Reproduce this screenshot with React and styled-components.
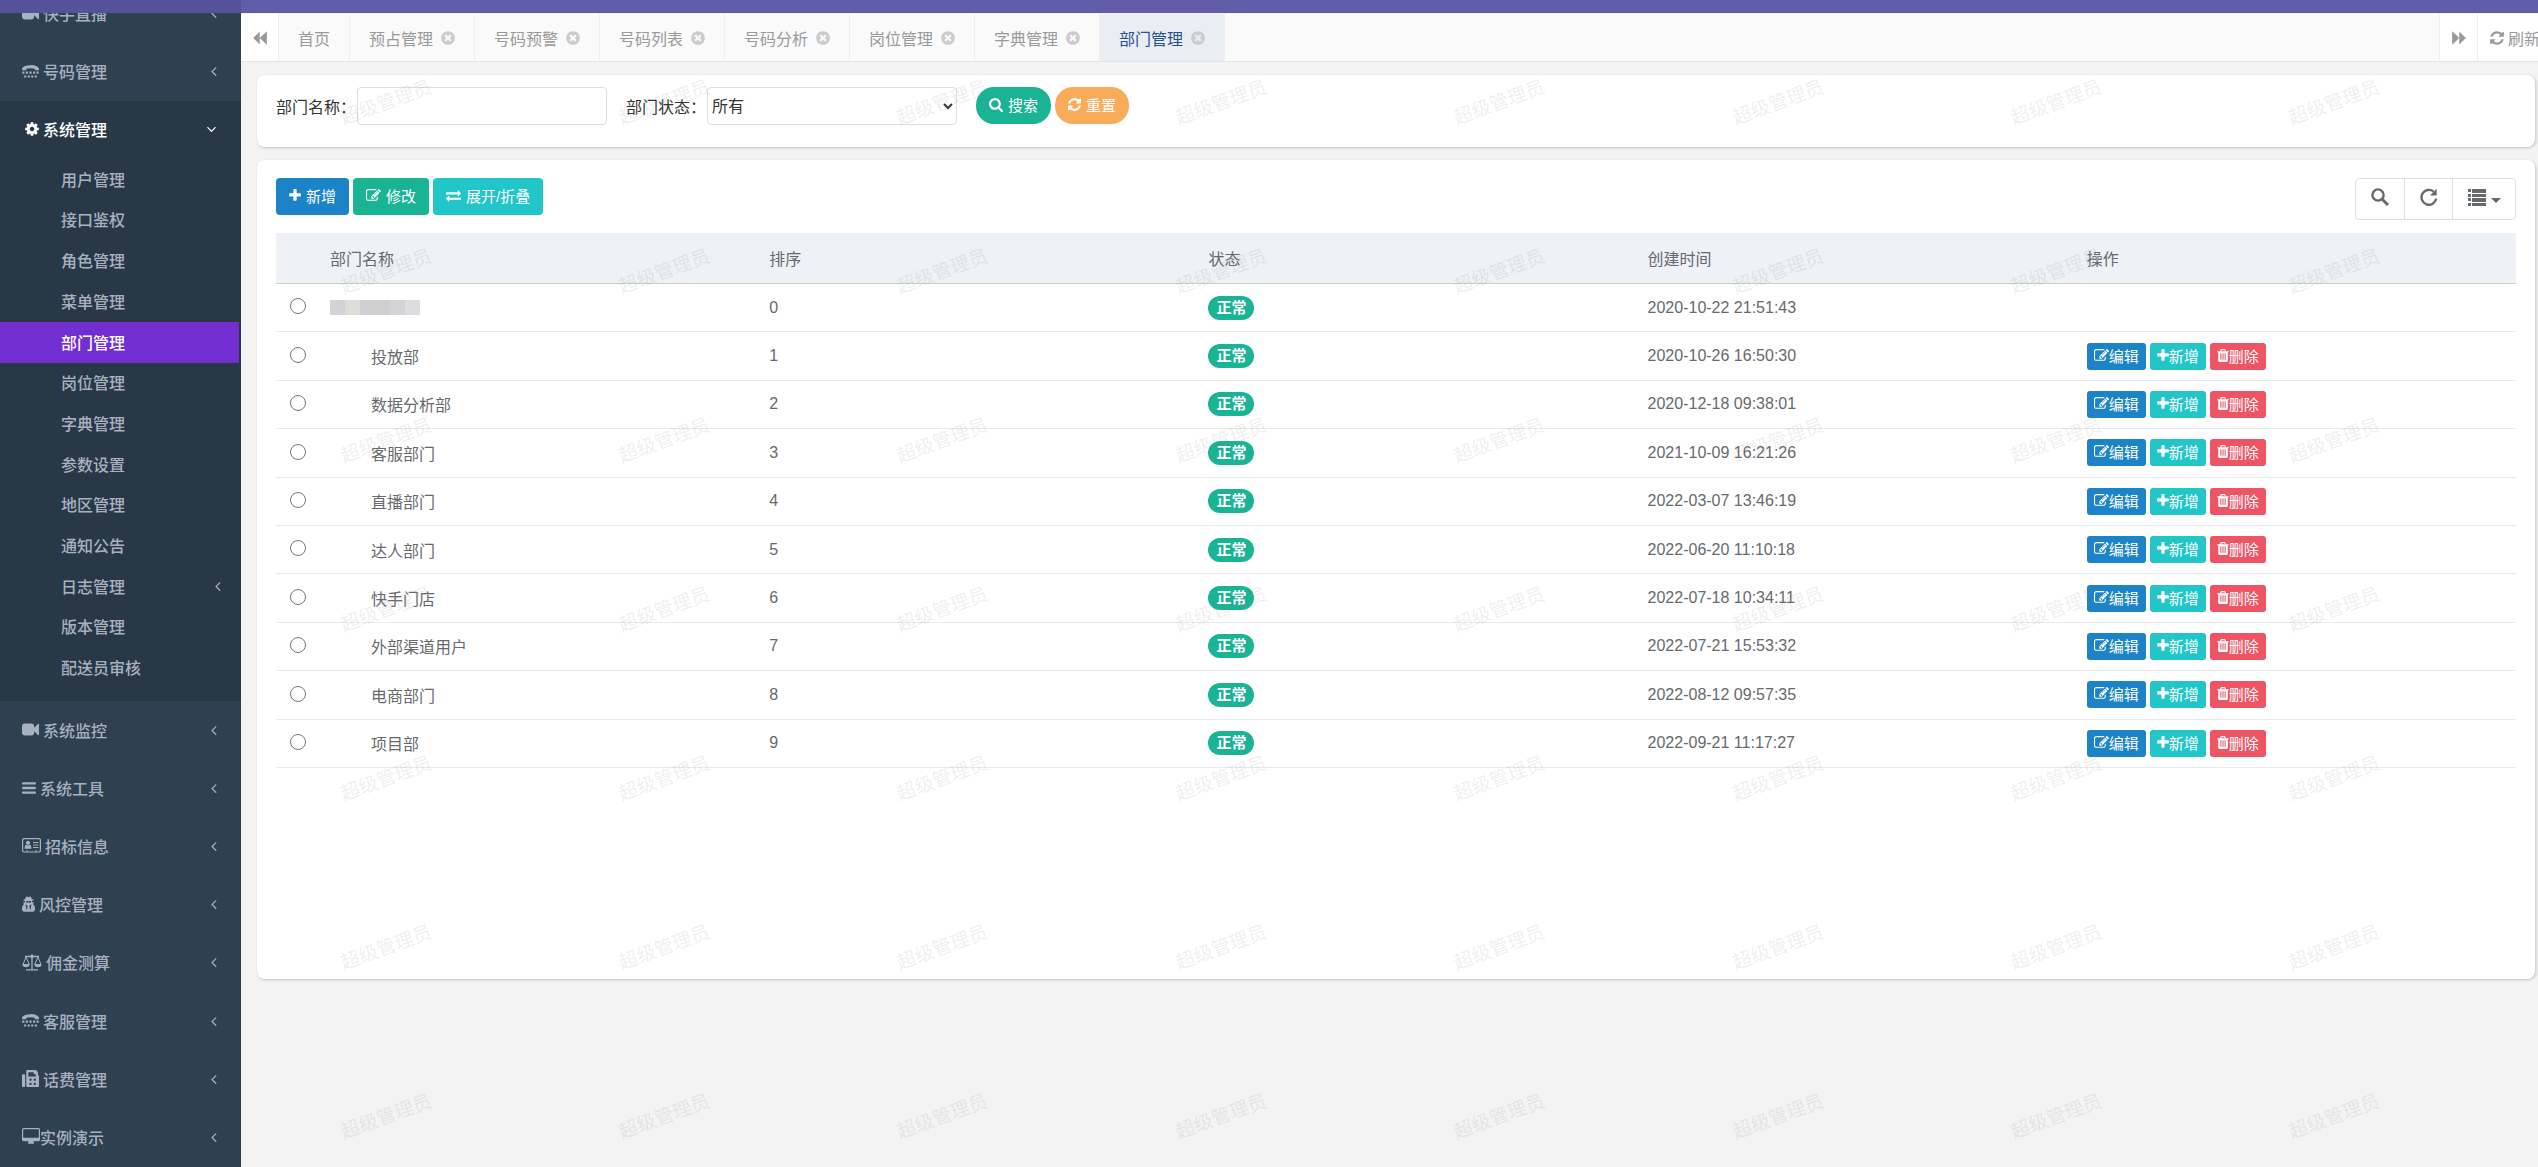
import { useState } from "react";
import styled, { createGlobalStyle, css } from "styled-components";
import { FaFax } from "react-icons/fa";

const GlobalStyle = createGlobalStyle`
  * {
    box-sizing: border-box;
  }
  body {
    margin: 0;
    overflow: hidden;
    font-family: "Liberation Sans", "Noto Sans CJK SC", sans-serif;
    font-size: 16px;
    color: #676a6c;
    background-color: #f3f3f3;
  }
  button, input, select {
    font-family: inherit;
  }
`

//icon outlines, drawn on a 1792 grid: [left edge, width, path]
const glyphs = {
  plus: [192, 1408, "M1600 736v192q0 40-28 68t-68 28h-416v416q0 40-28 68t-68 28h-192q-40 0-68-28t-28-68v-416h-416q-40 0-68-28t-28-68v-192q0-40 28-68t68-28h416v-416q0-40 28-68t68-28h192q40 0 68 28t28 68v416h416q40 0 68 28t28 68z"],
  edit: [0, 1792, "M888 1184l116-116-152-152-116 116v56h96v96h56zm440-720q-16-16-33 1l-350 350q-17 17-1 33t33-1l350-350q17-17 1-33zm80 594v190q0 119-84.5 203.5t-203.5 84.5h-832q-119 0-203.5-84.5t-84.5-203.5v-832q0-119 84.5-203.5t203.5-84.5h832q63 0 117 25 15 7 18 23 3 17-9 29l-49 49q-14 14-32 8-23-6-45-6h-832q-66 0-113 47t-47 113v832q0 66 47 113t113 47h832q66 0 113-47t47-113v-126q0-13 9-22l64-64q15-15 35-7t20 29zm-96-738l288 288-672 672h-288v-288zm444 132l-92 92-288-288 92-92q28-28 68-28t68 28l152 152q28 28 28 68t-28 68z"],
  exchange: [0, 1792, "M1792 1184v192q0 13-9.5 22.5t-22.5 9.5h-1376v192q0 13-9.5 22.5t-22.5 9.5q-12 0-24-10l-319-320q-9-9-9-22 0-14 9-23l320-320q9-9 23-9 13 0 22.5 9.5t9.5 22.5v192h1376q13 0 22.5 9.5t9.5 22.5zm0-544q0 14-9 23l-320 320q-9 9-23 9-13 0-22.5-9.5t-9.5-22.5v-192h-1376q-13 0-22.5-9.5t-9.5-22.5v-192q0-13 9.5-22.5t22.5-9.5h1376v-192q0-14 9-23t23-9q12 0 24 10l319 319q9 9 9 23z"],
  search: [64, 1664, "M1216 832q0-185-131.5-316.5t-316.5-131.5-316.5 131.5-131.5 316.5 131.5 316.5 316.5 131.5 316.5-131.5 131.5-316.5zm512 832q0 52-38 90t-90 38q-54 0-90-38l-343-342q-179 124-399 124-143 0-273.5-55.5t-225-150-150-225-55.5-273.5 55.5-273.5 150-225 225-150 273.5-55.5 273.5 55.5 225 150 150 225 55.5 273.5q0 220-124 399l343 343q37 37 37 90z"],
  refresh: [128, 1536, "M1639 1056q0 5-1 7-64 268-268 434.5t-478 166.5q-146 0-282.5-55t-243.5-157l-129 129q-19 19-45 19t-45-19-19-45v-448q0-26 19-45t45-19h448q26 0 45 19t19 45-19 45l-137 137q71 66 161 102t187 36q134 0 250-65t186-179q11-17 53-117 8-23 30-23h192q13 0 22.5 9.5t9.5 22.5zm25-800v448q0 26-19 45t-45 19h-448q-26 0-45-19t-19-45 19-45l138-138q-148-137-349-137-134 0-250 65t-186 179q-11 17-53 117-8 23-30 23h-199q-13 0-22.5-9.5t-9.5-22.5v-7q65-268 270-434.5t480-166.5q146 0 284 55.5t245 156.5l130-129q19-19 45-19t45 19 19 45z"],
  trash: [192, 1408, "M704 1376v-704q0-14-9-23t-23-9h-64q-14 0-23 9t-9 23v704q0 14 9 23t23 9h64q14 0 23-9t9-23zm256 0v-704q0-14-9-23t-23-9h-64q-14 0-23 9t-9 23v704q0 14 9 23t23 9h64q14 0 23-9t9-23zm256 0v-704q0-14-9-23t-23-9h-64q-14 0-23 9t-9 23v704q0 14 9 23t23 9h64q14 0 23-9t9-23zm-544-992h448l-48-117q-7-9-17-11h-317q-10 2-17 11zm928 32v64q0 14-9 23t-23 9h-96v948q0 83-47 143.5t-113 60.5h-832q-66 0-113-58.5t-47-141.5v-952h-96q-14 0-23-9t-9-23v-64q0-14 9-23t23-9h309l70-167q15-37 54-63t79-26h320q40 0 79 26t54 63l70 167h309q14 0 23 9t9 23z"],
  close: [128, 1536, "M1277 1122q0-26-19-45l-181-181 181-181q19-19 19-45 0-27-19-46l-90-90q-19-19-46-19-26 0-45 19l-181 181-181-181q-19-19-45-19-27 0-46 19l-90 90q-19 19-19 46 0 26 19 45l181 181-181 181q-19 19-19 45 0 27 19 46l90 90q19 19 46 19 26 0 45-19l181-181 181 181q19 19 45 19 27 0 46-19l90-90q19-19 19-46zm387-226q0 209-103 385.5t-279.5 279.5-385.5 103-385.5-103-279.5-279.5-103-385.5 103-385.5 279.5-279.5 385.5-103 385.5 103 279.5 279.5 103 385.5z"],
  video: [0, 1792, "M1792 352v1088q0 42-39 59-13 5-25 5-27 0-45-19l-403-403v166q0 119-84.5 203.5t-203.5 84.5h-704q-119 0-203.5-84.5t-84.5-203.5v-704q0-119 84.5-203.5t203.5-84.5h704q119 0 203.5 84.5t84.5 203.5v165l403-402q18-19 45-19 12 0 25 5 39 17 39 59z"],
  cog: [128, 1536, "M1152 896q0-106-75-181t-181-75-181 75-75 181 75 181 181 75 181-75 75-181zm512-109v222q0 12-8 23t-20 13l-185 28q-19 54-39 91 35 50 107 138 10 12 10 25t-9 23q-27 37-99 108t-94 71q-12 0-26-9l-138-108q-44 23-91 38-16 136-29 186-7 28-36 28h-222q-14 0-24.5-8.5t-11.5-21.5l-28-184q-49-16-90-37l-141 107q-10 9-25 9-14 0-25-11-126-114-165-168-7-10-7-23 0-12 8-23 15-21 51-66.5t54-70.5q-27-50-41-99l-183-27q-13-2-21-12.5t-8-23.5v-222q0-12 8-23t19-13l186-28q14-46 39-92-40-57-107-138-10-12-10-24 0-10 9-23 26-36 98.5-107.5t94.5-71.5q13 0 26 10l138 107q44-23 91-38 16-136 29-186 7-28 36-28h222q14 0 24.5 8.5t11.5 21.5l28 184q49 16 90 37l142-107q9-9 24-9 13 0 25 10 129 119 165 170 7 8 7 22 0 12-8 23-15 21-51 66.5t-54 70.5q26 50 41 98l183 28q13 2 21 12.5t8 23.5z"],
  bars: [128, 1536, "M192 256h1408q64 0 64 64v128q0 64-64 64h-1408q-64 0-64-64v-128q0-64 64-64zM192 768h1408q64 0 64 64v128q0 64-64 64h-1408q-64 0-64-64v-128q0-64 64-64zM192 1280h1408q64 0 64 64v128q0 64-64 64h-1408q-64 0-64-64v-128q0-64 64-64z"],
  tty: [0, 1792, "M0 736V640Q0 448 260 340T896 224T1532 340T1792 640V736Q1792 768 1760 768H1376Q1344 768 1344 736V608Q1130 544 896 544T448 608V736Q448 768 416 768H32Q0 768 0 736ZM32 896h224v224H32zM400 896h224v224H400zM784 896h224v224H784zM1168 896h224v224H1168zM1536 896h224v224H1536zM224 1312h224v224H224zM600 1312h224v224H600zM968 1312h224v224H968zM1344 1312h224v224H1344z"],
  secret: [192, 1408, "M704 1536l96-448-96-128-128-64zm384 0l128-640-128 64-96 128zm104-993q-2-4-4-6-10-8-96-8-70 0-167 19-7 2-21 2t-21-2q-97-19-167-19-86 0-96 8-2 2-4 6 2 18 4 27 2 3 7.5 6.5t7.5 10.5q2 4 7.5 20.5t7 20.5 7.5 17 8.5 17 9 14 12 13.5 14 9.5 17.5 8 20.5 4 24.5 2q36 0 59-12.5t32.5-30 14.5-34.5 11.5-29.5 17.5-12.5h12q11 0 17.5 12.5t11.5 29.5 14.5 34.5 32.5 30 59 12.5q13 0 24.5-2t20.5-4 17.5-8 14-9.5 12-13.5 9-14 8.5-17 7.5-17 7-20.5 7.5-20.5q2-7 7.5-10.5t7.5-6.5q2-9 4-27zm408 879q0 121-73 190t-194 69h-874q-121 0-194-69t-73-190q0-61 4.5-118t19-125.5 37.5-123.5 63.5-103.5 93.5-74.5l-90-220h214q-22-64-22-128 0-12 2-32-194-40-194-96 0-57 210-99 17-62 51.5-134t70.5-114q32-37 76-37 30 0 84 31t84 31 84-31 84-31q44 0 76 37 36 42 70.5 114t51.5 134q210 42 210 99 0 56-194 96 7 81-20 160h214l-82 225q63 33 107.5 96.5t65.5 143.5 29 151.5 8 148.5z"],
  desktop: [0, 1920, "M1792 992V160q0-13-9.5-22.5t-22.5-9.5h-1600q-13 0-22.5 9.5t-9.5 22.5v832q0 13 9.5 22.5t22.5 9.5h1600q13 0 22.5-9.5t9.5-22.5zm128-832v1088q0 66-47 113t-113 47h-544q0 37 16 77.5t32 71 16 43.5q0 26-19 45t-45 19h-512q-26 0-45-19t-19-45q0-14 16-44t32-70 16-78h-544q-66 0-113-47t-47-113v-1088q0-66 47-113t113-47h1600q66 0 113 47t47 113z"],
  left: [600, 640, "M1203 544q0 13-10 23l-393 393 393 393q10 10 10 23t-10 23l-50 50q-10 10-23 10t-23-10l-466-466q-10-10-10-23t10-23l466-466q10-10 23-10t23 10l50 50q10 10 10 23z"],
  down: [384, 1024, "M1395 736q0 13-10 23l-466 466q-10 10-23 10t-23-10l-466-466q-10-10-10-23t10-23l50-50q10-10 23-10t23 10l393 393 393-393q10-10 23-10t23 10l50 50q10 10 10 23z"],
  backward: [128, 1536, "M864 896L1664 128V1664ZM128 896L864 160V1632Z"],
  forward: [128, 1536, "M928 896L128 128V1664ZM1664 896L928 160V1632Z"],
}

const Glyph = ({ name, size = 16 }) => {
  const [x, width, d] = glyphs[name];

  return (
    <svg height={size} width={Math.round(size * width / 1792)} viewBox={`${x} 0 ${width} 1792`} fill="currentColor" aria-hidden="true">
      <path d={d} />
    </svg>
  )
}

const Scales = () => (
  <svg width="20" height="17" viewBox="0 0 20 17" fill="none" stroke="currentColor" aria-hidden="true">
    <path d="M3 2.5h14M10 0.5v15M4 15.8h12" strokeWidth="1.3" />
    <path d="M4 3L1 10.5h6.4L4 3zM16 3l-3.4 7.5H19L16 3z" />
    <path d="M0.3 10.5h7.4q-.6 2.8-3.7 2.8t-3.7-2.8zM12.3 10.5h7.4q-.6 2.8-3.7 2.8t-3.7-2.8z" fill="currentColor" stroke="none" />
    <circle cx="10" cy="2.2" r="1.6" fill="currentColor" stroke="none" />
  </svg>
)

const AddressCard = () => (
  <svg width="19" height="15" viewBox="0 0 19 15" fill="none" stroke="currentColor" aria-hidden="true">
    <rect x="0.6" y="0.6" width="17.8" height="13.4" rx="1.4" strokeWidth="1.2" />
    <path d="M11 4.5h5.5M11 7h5.5M11 9.5h5.5M4 13h2M13 13h2" strokeWidth="1.1" />
    <circle cx="6" cy="4.8" r="2.1" fill="currentColor" stroke="none" />
    <path d="M2.6 10.8q0-4 1.8-4 1.6 1.2 3.2 0 1.8 0 1.8 4z" fill="currentColor" stroke="none" />
  </svg>
)

const topMenu = [
  { name: "快手直播", icon: <Glyph name="video" size={17} /> },
  { name: "号码管理", icon: <Glyph name="tty" size={17} /> },
]

const systemMenu = [
  "用户管理", "接口鉴权", "角色管理", "菜单管理", "部门管理", "岗位管理", "字典管理",
  "参数设置", "地区管理", "通知公告", "日志管理", "版本管理", "配送员审核",
]

const bottomMenu = [
  { name: "系统监控", icon: <Glyph name="video" size={17} /> },
  { name: "系统工具", icon: <Glyph name="bars" /> },
  { name: "招标信息", icon: <AddressCard /> },
  { name: "风控管理", icon: <Glyph name="secret" size={17} /> },
  { name: "佣金测算", icon: <Scales /> },
  { name: "客服管理", icon: <Glyph name="tty" size={17} /> },
  { name: "话费管理", icon: <FaFax size={17} /> },
  { name: "实例演示", icon: <Glyph name="desktop" size={17} />, tight: true },
]

const tabs = ["预占管理", "号码预警", "号码列表", "号码分析", "岗位管理", "字典管理", "部门管理"];

const departments = [
  { name: "", order: 0, time: "2020-10-22 21:51:43" },
  { name: "投放部", order: 1, time: "2020-10-26 16:50:30" },
  { name: "数据分析部", order: 2, time: "2020-12-18 09:38:01" },
  { name: "客服部门", order: 3, time: "2021-10-09 16:21:26" },
  { name: "直播部门", order: 4, time: "2022-03-07 13:46:19" },
  { name: "达人部门", order: 5, time: "2022-06-20 11:10:18" },
  { name: "快手门店", order: 6, time: "2022-07-18 10:34:11" },
  { name: "外部渠道用户", order: 7, time: "2022-07-21 15:53:32" },
  { name: "电商部门", order: 8, time: "2022-08-12 09:57:35" },
  { name: "项目部", order: 9, time: "2022-09-21 11:17:27" },
]

const maskColors = ["#d2d3d6", "#dcddda", "#cfd0d3", "#cfcfd0", "#d3d4d7", "#dcdde0"];

//side menu
const MenuLink = ({ item }) => (
  <MenuItem href="#">
    <MenuLabel $tight={item.tight}>
      {item.icon}
      {item.name}
    </MenuLabel>
    <Glyph name="left" />
  </MenuItem>
)

const SideMenu = () => (
  <Sidebar>
    <Menu>
      {topMenu.map(item => <MenuLink key={item.name} item={item} />)}
      <OpenSection>
        <OpenItem href="#">
          <MenuLabel>
            <Glyph name="cog" />
            系统管理
          </MenuLabel>
          <Glyph name="down" />
        </OpenItem>
        <SubMenu>
          {systemMenu.map(name => (
            <SubItem key={name} href="#" $active={name === "部门管理"}>
              {name}
              {name === "日志管理" && <Glyph name="left" />}
            </SubItem>
          ))}
        </SubMenu>
      </OpenSection>
      {bottomMenu.map(item => <MenuLink key={item.name} item={item} />)}
    </Menu>
  </Sidebar>
)

//opened pages
const TabBar = () => (
  <Tabs>
    <TabButton aria-label="向左">
      <Glyph name="backward" />
    </TabButton>
    <TabList>
      <Tab href="#">首页</Tab>
      {tabs.map(name => (
        <Tab key={name} href="#" $active={name === "部门管理"}>
          {name}
          <Glyph name="close" />
        </Tab>
      ))}
    </TabList>
    <TabTools>
      <TabButton aria-label="向右">
        <Glyph name="forward" />
      </TabButton>
      <RefreshButton>
        <Glyph name="refresh" />
        刷新
      </RefreshButton>
    </TabTools>
  </Tabs>
)

const SearchForm = () => (
  <SearchPanel onSubmit={e => e.preventDefault()}>
    <Field>
      <label htmlFor="deptName">部门名称：</label>
      <TextInput id="deptName" type="text" />
    </Field>
    <Field>
      <label htmlFor="status">部门状态：</label>
      <Select id="status">
        <option>所有</option>
        <option>正常</option>
        <option>停用</option>
      </Select>
    </Field>
    <Buttons>
      <RoundButton type="submit" $color="#1ab394">
        <Glyph name="search" size={15} />
        搜索
      </RoundButton>
      <RoundButton type="reset" $color="#f8ac59">
        <Glyph name="refresh" size={15} />
        重置
      </RoundButton>
    </Buttons>
  </SearchPanel>
)

const Toolbar = () => (
  <ToolbarRow>
    <Buttons>
      <Button $color="#1c84c6"><Glyph name="plus" size={15} />新增</Button>
      <Button $color="#1ab394"><Glyph name="edit" size={15} />修改</Button>
      <Button $color="#23c6c8"><Glyph name="exchange" size={15} />展开/折叠</Button>
    </Buttons>
    <ToolGroup>
      <Tool aria-label="搜索">
        <svg width="18" height="18" viewBox="0 0 18 18" fill="none" stroke="currentColor" strokeWidth="3">
          <circle cx="7" cy="7" r="5.6" strokeWidth="2.4" />
          <path d="M11 11l6 6" />
        </svg>
      </Tool>
      <Tool aria-label="刷新">
        <svg width="18" height="18" viewBox="0 0 18 18">
          <path d="M13.6 3.6A7.4 7.4 0 1 0 16.2 10.6" fill="none" stroke="currentColor" strokeWidth="2.4" />
          <path d="M16.6 0.8V7.4H10Z" fill="currentColor" />
        </svg>
      </Tool>
      <Tool $wide aria-label="列">
        <svg width="18" height="18" viewBox="0 0 18 18" fill="currentColor">
          <path d="M0 1h3v3H0zM4 1h14v4H4zM0 6h3v3H0zM4 6h14v3H4zM0 10h3v3H0zM4 10h14v4H4zM0 15h3v3H0zM4 15h14v3H4z" />
        </svg>
        <Caret />
      </Tool>
    </ToolGroup>
  </ToolbarRow>
)

const DeptTable = () => {
  const [selected, setSelected] = useState(null);

  return (
    <Table>
      <thead>
        <tr>
          <HeadCell $radio aria-label="选择" />
          <HeadCell>部门名称</HeadCell>
          <HeadCell>排序</HeadCell>
          <HeadCell>状态</HeadCell>
          <HeadCell>创建时间</HeadCell>
          <HeadCell>操作</HeadCell>
        </tr>
      </thead>
      <tbody>
        {departments.map(dept => (
          <tr key={dept.order}>
            <Cell $radio>
              <Radio
                type="radio"
                name="dept"
                aria-label={`选择 ${dept.name}`}
                checked={selected === dept.order}
                onChange={() => setSelected(dept.order)}
              />
            </Cell>
            <Cell>
              {dept.name
                ? <ChildName>{dept.name}</ChildName>
                : <Mask>{maskColors.map(color => <MaskBlock key={color} $color={color} />)}</Mask>
              }
            </Cell>
            <Cell>{dept.order}</Cell>
            <Cell><Badge>正常</Badge></Cell>
            <Cell>{dept.time}</Cell>
            <Cell>
              {dept.name && (
                <Buttons>
                  <SmallButton $color="#1c84c6"><Glyph name="edit" size={15} />编辑</SmallButton>
                  <SmallButton $color="#23c6c8"><Glyph name="plus" size={15} />新增</SmallButton>
                  <SmallButton $color="#ed5565"><Glyph name="trash" size={15} />删除</SmallButton>
                </Buttons>
              )}
            </Cell>
          </tr>
        ))}
      </tbody>
    </Table>
  )
}

const App = () => (
  <>
    <GlobalStyle />
    <Page>
      <TopBar />
      <Body>
        <SideMenu />
        <Main>
          <TabBar />
          <Content>
            <SearchForm />
            <TablePanel>
              <Toolbar />
              <DeptTable />
            </TablePanel>
          </Content>
          <Watermarks aria-hidden="true">
            {Array.from({ length: 56 }, (_, i) => <Watermark key={i}>超级管理员</Watermark>)}
          </Watermarks>
        </Main>
      </Body>
    </Page>
  </>
)

const Page = styled.div`
  display: flex;
  flex-direction: column;
  height: 100vh;
`

const TopBar = styled.header`
  flex: none;
  height: 13px;
  background: linear-gradient(to right, #555299 241px, #605ca8 241px);
`

const Body = styled.div`
  display: flex;
  flex: 1;
  min-height: 0;
`

const Sidebar = styled.nav`
  flex: none;
  width: 241px;
  overflow: hidden;
  background-color: #2f4050;
`

/* the menu is scrolled, so its first item is half hidden */
const Menu = styled.div`
  display: flex;
  flex-direction: column;
  height: calc(100% + 28px);
  margin-top: -28px;
`

const itemCSS = css`
  display: flex;
  align-items: center;
  justify-content: space-between;
  font-weight: 500;
  text-decoration: none;
  color: #a7b1c2;
`

const MenuItem = styled.a`
  ${itemCSS}
  flex: 1 0 58px;
  padding: 0 24px 2px 22px;
`

const MenuLabel = styled.span`
  display: flex;
  align-items: center;
  gap: ${props => props.$tight ? "0" : "4px"};
`

const OpenSection = styled.div`
  flex: none;
  padding-bottom: 13px;
  background-color: #293846;
`

const OpenItem = styled.a`
  ${itemCSS}
  height: 58px;
  padding: 0 25px 2px;
  color: white;
`

const SubMenu = styled.div`
  display: flex;
  flex-direction: column;
  height: 529px;
`

const SubItem = styled.a`
  ${itemCSS}
  flex: 1;
  margin-right: 2px;
  padding: 0 18px 2px 61px;
  ${props => props.$active && css`
    color: white;
    background-color: #722ed1;
  `}
`

const Main = styled.main`
  position: relative;
  flex: 1;
  min-width: 0;
  overflow: hidden;
`

const Tabs = styled.div`
  display: flex;
  height: 49px;
  border-top: 1px solid #f0f0f5;
  border-bottom: 1px solid #e4e4e4;
  background-color: #fafafa;
`

const TabButton = styled.button`
  display: flex;
  flex: none;
  align-items: center;
  justify-content: center;
  width: 38px;
  padding: 0;
  border: 0;
  border-right: 1px solid #eee;
  font-size: 16px;
  color: #999;
  background-color: white;
`

const RefreshButton = styled(TabButton)`
  gap: 4px;
  width: 75px;
`

const TabList = styled.nav`
  display: flex;
  flex: 1;
`

const Tab = styled.a`
  display: flex;
  align-items: center;
  gap: 8px;
  padding: 0 19px;
  border-right: 1px solid #eee;
  text-decoration: none;
  color: ${props => props.$active ? "#23508e" : "#999"};
  background-color: ${props => props.$active ? "#eaedf1" : "transparent"};
  & svg {
    color: #ccc;
  }
`

/* narrower than its buttons: the last one is cut by the window edge */
const TabTools = styled.div`
  display: flex;
  flex: none;
  width: 99px;
  overflow: hidden;
  border-left: 1px solid #eee;
`

const Content = styled.div`
  display: flex;
  flex-direction: column;
  gap: 13px;
  padding: 13px 3px 13px 16px;
`

const panelCSS = css`
  border-radius: 8px;
  background-color: white;
  box-shadow: 1px 1px 3px rgba(0, 0, 0, 0.2);
`

const SearchPanel = styled.form`
  ${panelCSS}
  display: flex;
  gap: 19px;
  padding: 12px 19px 22px;
  color: #333;
`

const Field = styled.div`
  display: flex;
  align-items: center;
  gap: 1px;
`

const fieldCSS = css`
  width: 250px;
  height: 38px;
  border: 1px solid #ddd;
  border-radius: 4px;
  font-size: 16px;
  color: #333;
  background-color: white;
`

const TextInput = styled.input`
  ${fieldCSS}
  padding: 0 6px;
`

const Select = styled.select`
  ${fieldCSS}
`

const Buttons = styled.div`
  display: flex;
  gap: 4px;
`

const Button = styled.button`
  display: flex;
  align-items: center;
  gap: 5px;
  height: 37px;
  padding: 0 13px 2px;
  border: 0;
  border-radius: 4px;
  font-size: 15px;
  color: white;
  background-color: ${props => props.$color};
`

const RoundButton = styled(Button)`
  border-radius: 18px;
`

const SmallButton = styled(Button)`
  gap: 0;
  height: 27px;
  padding: 0 7px 2px;
  border-radius: 3px;
`

const TablePanel = styled.section`
  ${panelCSS}
  min-height: 819px;
  padding: 18px 19px;
`

const ToolbarRow = styled.div`
  display: flex;
  align-items: flex-start;
  justify-content: space-between;
  margin-bottom: 13px;
`

const ToolGroup = styled.div`
  display: flex;
  border: 1px solid #ddd;
  border-radius: 4px;
`

const Tool = styled.button`
  display: flex;
  align-items: center;
  justify-content: center;
  gap: 5px;
  width: ${props => props.$wide ? "63px" : "48px"};
  height: 40px;
  padding: 0 0 4px;
  border: 0;
  color: #676a6c;
  background-color: transparent;
  & + & {
    border-left: 1px solid #ddd;
  }
`

const Caret = styled.span`
  margin-top: 6px;
  border: 5px solid transparent;
  border-top-color: currentColor;
  border-bottom: 0;
`

const Table = styled.table`
  width: 100%;
  height: 535px;
  table-layout: fixed;
  border-collapse: separate;
  border-spacing: 0;
`

const HeadCell = styled.th`
  width: ${props => props.$radio ? "44px" : "auto"};
  height: 51px;
  padding: 0 10px;
  border-bottom: 1px solid #ccc;
  font-weight: 400;
  text-align: left;
  background-color: #eef1f6;
`

const Cell = styled.td`
  height: 48px;
  padding: ${props => props.$radio ? "0 0 4px" : "0 10px"};
  border-bottom: 1px solid #e7eaec;
  text-align: ${props => props.$radio ? "center" : "left"};
  vertical-align: middle;
`

const Radio = styled.input`
  width: 16px;
  height: 16px;
  margin: 0;
  vertical-align: middle;
`

const ChildName = styled.div`
  padding-left: 41px;
`

const Mask = styled.div`
  display: flex;
`

const MaskBlock = styled.span`
  width: 15px;
  height: 15px;
  background-color: ${props => props.$color};
`

const Badge = styled.span`
  display: inline-block;
  padding: 0 8px;
  border-radius: 12px;
  font-size: 15px;
  font-weight: 600;
  line-height: 24px;
  color: white;
  background-color: #1ab394;
`

const Watermarks = styled.div`
  position: absolute;
  top: 3px;
  left: 5px;
  right: 65px;
  display: grid;
  grid-template-columns: repeat(8, 1fr);
  grid-auto-rows: 169px;
  place-items: center;
  pointer-events: none;
`

const Watermark = styled.span`
  font-size: 19px;
  color: rgba(128, 128, 128, 0.14);
  transform: rotate(-20deg);
`

export default App;
